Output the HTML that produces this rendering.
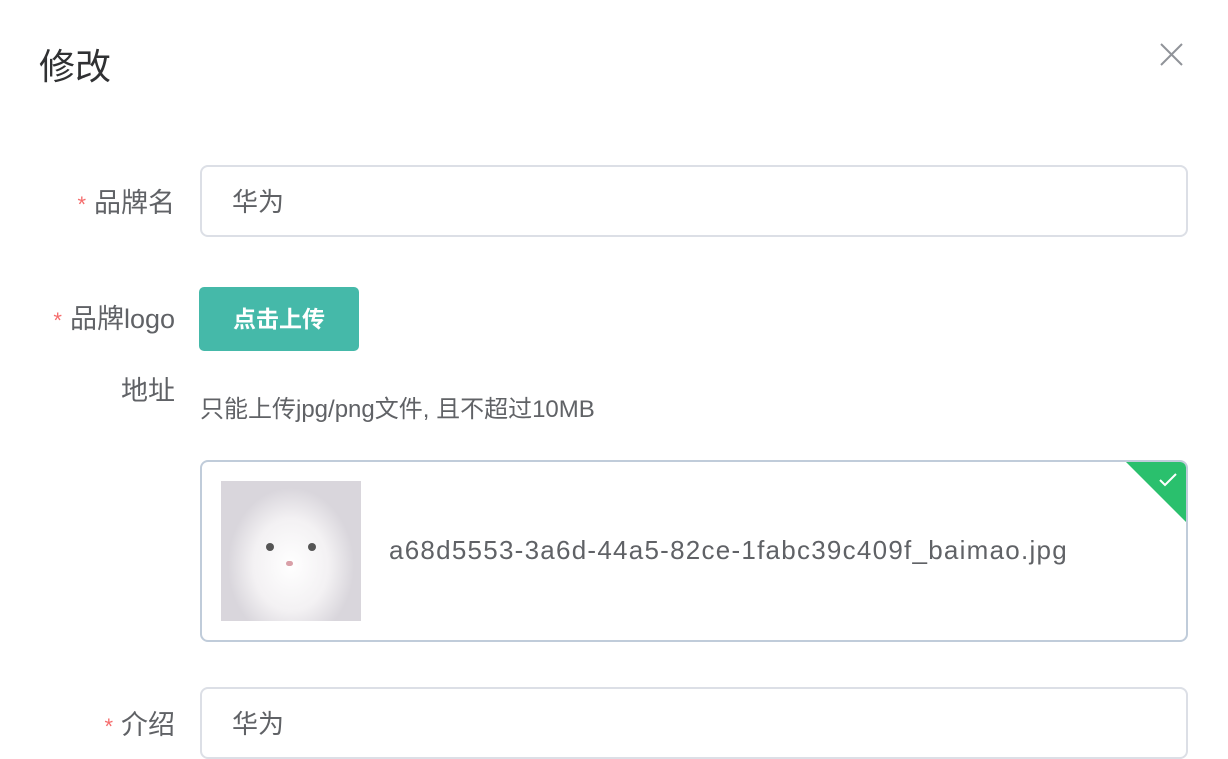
<html><head><style>
body{margin:0;width:1228px;height:726px;overflow:hidden;background:#fff;font-family:"Liberation Sans","Noto Sans CJK SC",sans-serif;position:relative}
.a{position:absolute}
.lbl{font-size:27px;color:#606266;text-align:right;width:175px;left:0}
.lbl i{color:#f56c6c;font-style:normal;margin-right:8px;font-size:22px}
.inp{left:200px;width:988px;border:2px solid #dcdfe6;border-radius:8px;box-sizing:border-box;font-size:26px;color:#606266;padding-left:30px}
</style></head><body>
<div class="a" style="left:39px;top:38px;font-size:36px;color:#303133">修改</div>
<svg class="a" style="left:1160px;top:43px" width="23" height="23" viewBox="0 0 23 23"><path d="M1 1L22 22M22 1L1 22" stroke="#909399" stroke-width="2"/></svg>
<div class="a lbl" style="top:181px"><i>*</i>品牌名</div>
<div class="a inp" style="top:165px;height:72px;line-height:70px">华为</div>
<div class="a lbl" style="top:297px"><i>*</i>品牌logo</div>
<div class="a lbl" style="top:369px">地址</div>
<div class="a" style="left:199px;top:287px;width:160px;height:64px;background:#45b9a9;border-radius:5px;color:#fff;font-size:23px;font-weight:bold;text-align:center;line-height:64px">点击上传</div>
<div class="a" style="left:200px;top:389px;font-size:24px;color:#606266">只能上传jpg/png文件, 且不超过10MB</div>
<div class="a" style="left:200px;top:460px;width:988px;height:182px;border:2px solid #c0ccda;border-radius:8px;box-sizing:border-box;overflow:hidden">
<div class="a" style="left:19px;top:19px;width:140px;height:140px;background:radial-gradient(ellipse 45% 55% at 50% 60%,#fff 0%,#f3f1f3 60%,#d9d6dc 100%)">
<div class="a" style="left:45px;top:62px;width:8px;height:8px;border-radius:50%;background:#555"></div>
<div class="a" style="left:87px;top:62px;width:8px;height:8px;border-radius:50%;background:#555"></div>
<div class="a" style="left:65px;top:80px;width:7px;height:5px;background:#d9a0a8;border-radius:3px"></div>
</div>
<div class="a" style="left:187px;top:73px;font-size:26px;letter-spacing:1.25px;color:#606266">a68d5553-3a6d-44a5-82ce-1fabc39c409f_baimao.jpg</div>
<div class="a" style="right:-2px;top:-2px;width:0;height:0;border-top:64px solid #2ac06d;border-left:64px solid transparent"></div>
<svg class="a" style="right:8px;top:10px" width="20" height="16" viewBox="0 0 20 16"><path d="M2 8L7 13L18 2" stroke="#fff" stroke-width="2" fill="none"/></svg>
</div>
<div class="a lbl" style="top:703px"><i>*</i>介绍</div>
<div class="a inp" style="top:687px;height:72px;line-height:70px">华为</div>
</body></html>
